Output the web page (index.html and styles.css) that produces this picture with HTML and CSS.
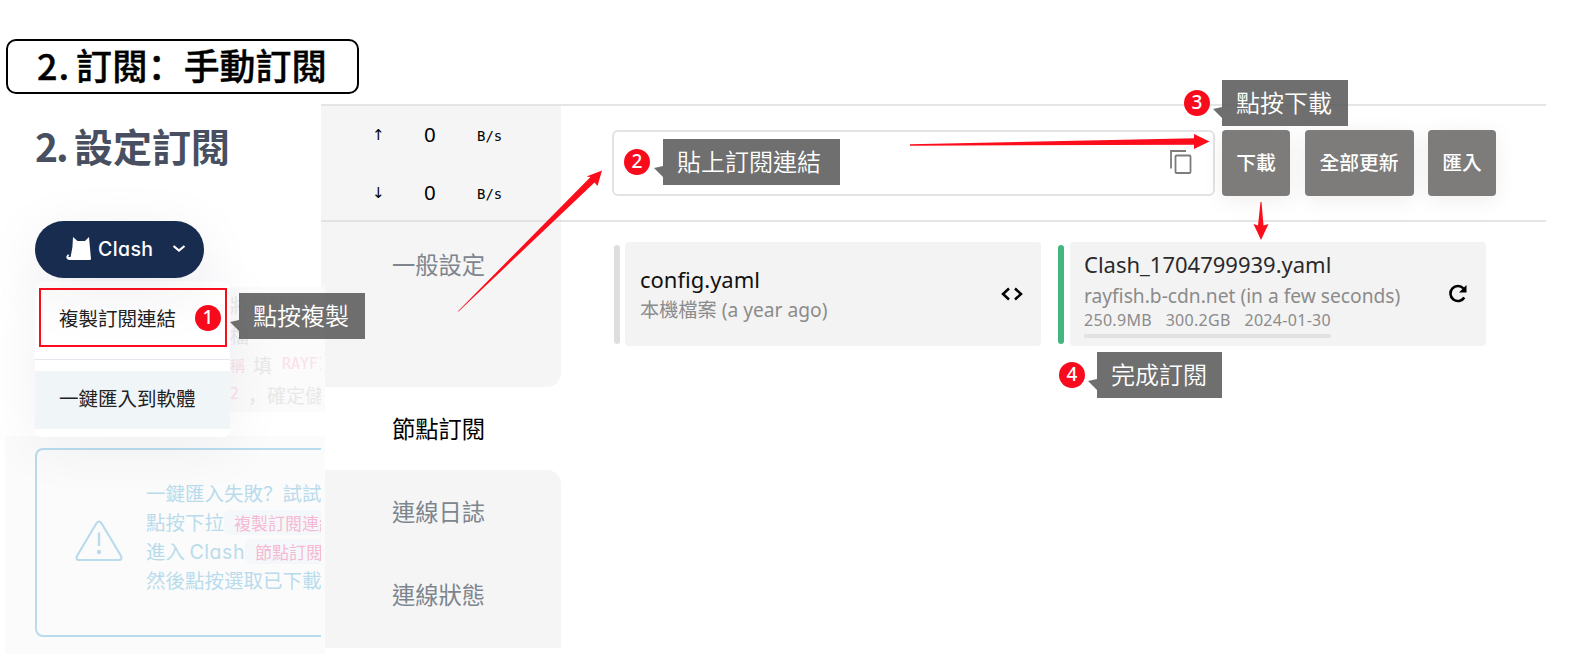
FILE: index.html
```html
<!DOCTYPE html>
<html lang="zh-Hant">
<head>
<meta charset="utf-8">
<title>訂閱：手動訂閱</title>
<link rel="stylesheet" href="styles.css">
</head>
<body>
<h1 class="title" lang="zh-Hans"><span class="title-num">2.</span><span>訂閱：手動訂閱</span></h1>
<main class="main">
  <section class="guide">
    <h2 class="guide-heading"><span class="guide-num">2.</span>設定訂閱</h2>
    <div class="clash-button">
      <svg class="cat" viewBox="0 0 25 24" width="25" height="24"><path d="M7 0 L11.500 4 H19 L23 0 L25 22 Q25 23 23.500 23 H5 C2 23.500 0 22 .4 19.500 C1 17 3 17 3.500 18 C1.500 19 2 20.500 4.500 20 Q7 11 7 0Z" fill="#fff"/></svg>
      <span class="clash-label">Clash</span>
      <svg class="chevron" viewBox="0 0 14 9" width="14" height="9"><path d="M1.500 2 L7 6.500 L12.500 2" fill="none" stroke="#fff" stroke-width="2.200"/></svg>
    </div>
    <div class="dropdown">
      <div class="option option-copy"><span>複製訂閱連結</span><span class="badge">1</span></div>
      <div class="option option-import">一鍵匯入到軟體</div>
    </div>
    <div class="faded" lang="zh-Hans">
      <p>將自動跳</p>
      <p>檔</p>
      <p><code>稱</code><span class="fill">填</span><code class="ray">RAYFI</code></p>
      <p><code>2</code><span class="comma">，</span>確定儲</p>
    </div>
    <div class="alert-area">
      <div class="alert" lang="zh-Hans">
        <svg class="warning" viewBox="0 0 48 42" width="48" height="42"><path d="M21.300 3.500 Q24 -.5 26.700 3.500 L46 36 Q47.500 40 44 40 H4 Q.5 40 2 36Z" fill="none" stroke="#b9dcec" stroke-width="2.200"/><path d="M24 12.500 V26" stroke="#b9dcec" stroke-width="2.400"/><circle cx="24" cy="32" r="2.200" fill="#b9dcec"/></svg>
        <div class="alert-text">
          <p>一鍵匯入失敗？試試</p>
          <p>點按下拉<code>複製訂閱連結</code></p>
          <p>進入 <span class="latin">Clash</span><code>節點訂閱</code></p>
          <p>然後點按選取已下載</p>
        </div>
      </div>
    </div>
  </section>
  <section class="app">
    <nav class="sidebar">
      <div class="traffic">
        <div class="rate"><i>↑</i><b>0</b><span>B/s</span></div>
        <div class="rate"><i>↓</i><b>0</b><span>B/s</span></div>
      </div>
      <div class="nav-item first">一般設定</div>
      <div class="nav-item active">節點訂閱</div>
      <div class="nav-rest">
        <div class="nav-item">連線日誌</div>
        <div class="nav-item">連線狀態</div>
      </div>
    </nav>
    <div class="content">
      <div class="toolbar">
        <div class="url-field">
          <svg width="22" height="24" viewBox="0 0 22 24"><path d="M1 18.500 V1 H16" fill="none" stroke="#7d7c7b" stroke-width="1.800"/><rect x="5.500" y="5.500" width="15" height="17.500" rx="1" fill="none" stroke="#7d7c7b" stroke-width="1.800"/></svg>
        </div>
        <div class="button">下載</div>
        <div class="button wide">全部更新</div>
        <div class="button">匯入</div>
      </div>
      <div class="profiles">
        <span class="marker"></span>
        <article class="card">
          <div class="card-text"><p class="name">config.yaml</p><p class="source">本機檔案 (a year ago)</p></div>
          <svg width="22" height="14" viewBox="0 0 22 14"><path d="M8 1.500 L2 7 L8 12.500 M14 1.500 L20 7 L14 12.500" fill="none" stroke="#000" stroke-width="2.500"/></svg>
        </article>
        <span class="marker on"></span>
        <article class="card">
          <div class="card-text second"><p class="name">Clash_1704799939.yaml</p><p class="source">rayfish.b-cdn.net (in a few seconds)</p><p class="usage"><span>250.9MB</span><span>300.2GB</span><span>2024-01-30</span></p><div class="progress"></div></div>
          <svg width="20" height="20" viewBox="0 0 20 20"><path d="M15.500 4.500 A7.500 7.500 0 1 0 16.300 13.500" fill="none" stroke="#000" stroke-width="2.600"/><path d="M18.500 1 V8.500 H11Z" fill="#000"/></svg>
        </article>
      </div>
    </div>
  </section>
</main>
<div class="callout c1">點按複製</div>
<div class="badge b2">2</div><div class="callout c2">貼上訂閱連結</div>
<div class="badge b3">3</div><div class="callout c3">點按下載</div>
<div class="badge b4">4</div><div class="callout c4">完成訂閱</div>
<svg class="arrows" width="1590" height="654" viewBox="0 0 1590 654" fill="#fc0d1b">
  <path d="M457.700 311.500 L590.500 177 L586.500 176.500 L602 170.500 L597.500 186 L594.500 182.500 L458.500 311.500Z"/>
  <path d="M910 144.300 L1194 138.200 L1194 134 L1209.500 141.500 L1194 149 L1194 144.700 L910 145.700Z"/>
  <path d="M1260.500 202 L1258 225.500 L1253.500 224 L1261 240 L1268.500 224 L1263.500 225.500 L1261.500 202Z"/>
</svg>
</body>
</html>
```
FILE: styles.css
```css
* { box-sizing: border-box; }
body { margin: 0; width: 1590px; height: 654px; overflow: hidden; position: relative; background: #fff; font-family: "Noto Sans", "Noto Sans CJK TC", sans-serif; display: flex; flex-direction: column; }
p, h1, h2 { margin: 0; }
.title { flex: none; width: 353px; height: 55px; margin: 39px 0 0 6px; padding: 0 0 5px 29px; border: 2px solid #000; border-radius: 10px; display: flex; align-items: center; font: 500 35.900px/46px "Noto Sans CJK SC", sans-serif; -webkit-text-stroke: .4px #000; white-space: nowrap; }
.title-num { width: 39px; letter-spacing: 1px; }
.main { display: flex; height: 560px; }
.guide { width: 325px; flex: none; display: grid; grid-template: 127px 60px 155px 218px / 230px 95px; overflow: hidden; position: relative; z-index: 1; }
.guide-heading { grid-area: 1 / 1 / 2 / 3; padding: 23px 0 0 35px; font: 700 39px/56px "Noto Sans CJK TC", sans-serif; color: #474f60; display: flex; }
.guide-num { width: 39px; letter-spacing: -2px; }
.clash-button { grid-area: 2 / 1; position: relative; z-index: 2; width: 169px; height: 57px; margin-left: 35px; border-radius: 29px; background: #182c50; display: flex; align-items: center; padding: 0 0 2px 31px; box-shadow: 0 14px 60px rgba(40,40,90,.08); }
.clash-label, .latin { font-family: Inter, sans-serif; font-feature-settings: "cv11"; }
.latin { letter-spacing: .6px; }
.clash-label { color: #fff; font-size: 19.500px; font-weight: 500; letter-spacing: .4px; width: 81px; padding-left: 7px; }
.dropdown { grid-area: 3 / 1; position: relative; z-index: 1; margin-left: 35px; width: 195px; height: 156px; background: #fff; border-radius: 6px; padding-top: 7px; box-shadow: 0 10px 60px rgba(40,40,90,.06); font: 400 19.500px/30px "Noto Sans CJK TC", sans-serif; color: #222; }
.option { display: flex; align-items: center; }
.option-copy { border: 2px solid #fc0d1b; width: 188px; height: 59px; margin-left: 4px; padding-left: 18px; gap: 19px; }
.option-import { height: 58px; margin-top: 24px; background: #f0f5f8; padding: 0 0 4px 24px; position: relative; }
.option-import::before { content: ""; position: absolute; left: 0; top: -12px; width: 195px; height: 1px; background: #e4e8ee; }
.badge { width: 26px; height: 26px; border-radius: 50%; background: #f70b1c; color: #fff; font: 500 19px/25px "Noto Sans", sans-serif; text-align: center; flex: none; }
.faded { grid-area: 3 / 2; margin: 6px 0 24px; background: #fbfbfb; width: 95px; border-right: 4px solid #fbfbfb; overflow: hidden; font: 400 19px/29.500px "Noto Sans CJK SC", sans-serif; color: #e8e8e9; white-space: nowrap; padding-top: 3px; height: 125px; }
.faded p { display: flex; align-items: center; height: 29.800px; }
.faded code { font: 400 15px "DejaVu Sans Mono", "Noto Sans CJK TC", monospace; color: #f9e0e9; }
.fill { margin: 0 10px 0 8px; }
.comma { margin-left: 9px; width: 20px; }
.alert-area { grid-area: 4 / 1 / 5 / 3; margin-left: 5px; background: #fbfbfb; padding: 12px 4px 17px 30px; }
.alert { height: 189px; border: 2px solid #b9dcec; border-right: 0; border-radius: 8px 0 0 8px; overflow: hidden; display: flex; padding: 28px 0 0 38px; color: #b9dcec; font: 400 19.500px/29px "Noto Sans CJK SC", sans-serif; white-space: nowrap; }
.alert p { height: 29px; }
.warning { flex: none; margin: 42px 23px 0 0; }
.alert code { font: 400 17px/25px "Noto Sans CJK TC", sans-serif; color: #f6b9d3; background: #f5f8fa; border-radius: 6px; padding: 0 10px; }
.app { width: 1225px; flex: none; margin: 10px 0 0 -4px; height: 544px; display: flex; border-top: 2px solid #e5e5e5; }
.sidebar { width: 240px; flex: none; }
.traffic { height: 116px; background: #f5f5f5; border-bottom: 2px solid #e2e2e2; }
.rate { height: 58px; display: flex; align-items: center; font-family: "Noto Sans", sans-serif; }
.rate i { width: 52px; margin-left: 51px; font: 15px "DejaVu Sans", sans-serif; }
.rate b { width: 53px; font-weight: 400; font-size: 20.500px; padding-bottom: 2px; }
.rate span { font: 14px "DejaVu Sans Mono", monospace; padding-top: 2px; }
.nav-item { height: 83px; display: grid; place-items: center; padding: 0 5px 2px 0; font: 400 23.300px/34px "Noto Sans CJK TC", sans-serif; color: #7d858e; }
.first { height: 165px; padding-bottom: 82px; background: #f5f5f5; border-radius: 0 0 14px 0; }
.active { color: #000; }
.nav-rest { height: 178px; background: #f5f5f5; border-radius: 0 14px 0 0; }
.content { width: 985px; }
.toolbar { height: 116px; border-bottom: 2px solid #e5e5e5; padding: 24px 0 0 51px; display: flex; }
.url-field { width: 603px; height: 66px; border: 2px solid #e3e3e3; border-radius: 6px; margin-right: 7px; display: flex; align-items: center; justify-content: flex-end; padding: 0 21px 2px 0; }
.button { width: 68px; height: 66px; margin-right: 14.500px; border-radius: 4px; background: #7d7c7b; color: #fff; box-shadow: 0 4px 22px rgba(0,0,0,.07); display: grid; place-items: center; padding-bottom: 2px; font: 500 19.800px/30px "Noto Sans CJK TC", sans-serif; }
.wide { width: 109px; }
.profiles { display: flex; padding: 20px 0 0 53px; height: 126px; }
.marker { width: 6px; height: 99px; margin: 3px 5px 0 0; border-radius: 3px; background: #dedede; }
.marker.on { background: #44b581; margin: 3px 6px 0 17px; }
.card { width: 416px; height: 104px; background: #f3f3f3; border-radius: 4px; padding: 0 18px 0 15px; display: flex; align-items: center; justify-content: space-between; }
.card-text { padding-bottom: 2px; }
.name { font-size: 22px; line-height: 32px; color: #111; }
.source { font-size: 19.200px; line-height: 30px; height: 29px; color: #8b8b8b; white-space: nowrap; }
.second { padding-bottom: 1px; margin-left: -1px; }
.second .name { color: #2a2a2a; line-height: 29px; padding-bottom: 2px; }
.usage { display: flex; justify-content: space-between; width: 247px; font-size: 16px; letter-spacing: .3px; line-height: 20px; height: 19px; color: #8b8b8b; }
.progress { height: 4px; width: 247px; border-radius: 2px; background: #e1e1e1; margin-top: 5px; }
.callout { position: absolute; z-index: 2; height: 46px; background: rgba(93,93,93,.89); color: #fff; font: 350 24px/43px "Noto Sans CJK TC", sans-serif; padding-left: 14px; white-space: nowrap; }
.callout::before { content: ""; position: absolute; left: -9px; top: 27px; width: 9px; height: 11px; background: inherit; clip-path: polygon(0 18%, 100% 0, 100% 100%); }
.b2, .b3, .b4 { position: absolute; }
.c1 { left: 239px; top: 293px; width: 126px; }
.c2 { left: 663px; top: 139px; width: 177px; }
.c3 { left: 1222px; top: 80px; width: 126px; }
.c4 { left: 1097px; top: 352px; width: 125px; }
.b2 { left: 624px; top: 149px; }
.b3 { left: 1184px; top: 90px; }
.b4 { left: 1059px; top: 362px; }
.arrows { position: absolute; z-index: 3; left: 0; top: 0; }
```
